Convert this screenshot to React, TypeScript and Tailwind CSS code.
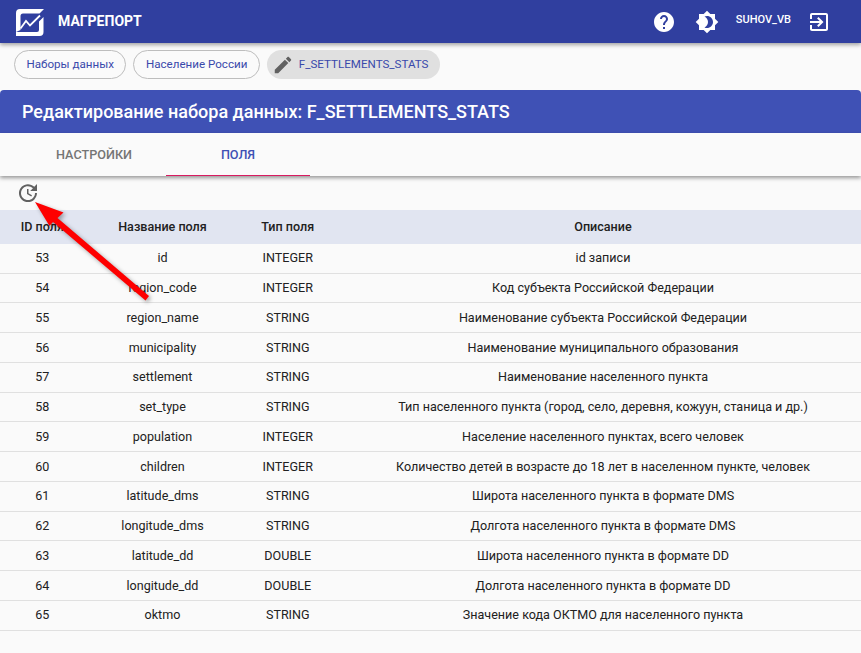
const rows = [
  ["53", "id", "INTEGER", "id записи"],
  ["54", "region_code", "INTEGER", "Код субъекта Российской Федерации"],
  ["55", "region_name", "STRING", "Наименование субъекта Российской Федерации"],
  ["56", "municipality", "STRING", "Наименование муниципального образования"],
  ["57", "settlement", "STRING", "Наименование населенного пункта"],
  ["58", "set_type", "STRING", "Тип населенного пункта (город, село, деревня, кожуун, станица и др.)"],
  ["59", "population", "INTEGER", "Население населенного пунктах, всего человек"],
  ["60", "children", "INTEGER", "Количество детей в возрасте до 18 лет в населенном пункте, человек"],
  ["61", "latitude_dms", "STRING", "Широта населенного пункта в формате DMS"],
  ["62", "longitude_dms", "STRING", "Долгота населенного пункта в формате DMS"],
  ["63", "latitude_dd", "DOUBLE", "Широта населенного пункта в формате DD"],
  ["64", "longitude_dd", "DOUBLE", "Долгота населенного пункта в формате DD"],
  ["65", "oktmo", "STRING", "Значение кода ОКТМО для населенного пункта"],
];

const Logo = () => (
  <svg width="30" height="30" viewBox="0 0 30 30" className="shrink-0">
    <path d="M5 2H29L24.5 6.5H8Q5.5 6.5 5.5 9V23L1 25V6Q1 2 5 2Z" fill="#fff" />
    <path d="M28.5 10V25Q28.5 29 24.5 29H1V25H22Q24 25 24 23V14.5Z" fill="#fff" />
    <path d="M5.5 21.5L11 14L15 18.5L25 8.5" fill="none" stroke="#fff" strokeWidth="1.8" />
  </svg>
);

const App = () => {
  return (
    <div className="relative w-[861px] h-[653px] overflow-hidden bg-[#fafafa] font-['Roboto',sans-serif] text-[12.57px] text-[#212121]">
      <header className="relative z-10 flex items-center h-[43px] pl-[15px] bg-[#303f9f] text-white shadow-[0_2px_4px_rgba(0,0,0,0.35)]">
        <Logo />
        <span className="ml-[13px] text-[14px] font-bold">МАГРЕПОРТ</span>
        <div className="ml-auto flex items-center">
          <svg width="24" height="24" viewBox="0 0 24 24" fill="#fff">
            <path d="M12 2C6.48 2 2 6.48 2 12s4.48 10 10 10 10-4.48 10-10S17.52 2 12 2zm1 17h-2v-2h2v2zm2.07-7.75l-.9.92C13.45 12.9 13 13.5 13 15h-2v-.5c0-1.1.45-2.1 1.17-2.83l1.24-1.26c.37-.36.59-.86.59-1.41 0-1.1-.9-2-2-2s-2 .9-2 2H8c0-2.21 1.79-4 4-4s4 1.79 4 4c0 .88-.36 1.68-.93 2.25z" />
          </svg>
          <svg className="ml-[19px]" width="24" height="24" viewBox="0 0 24 24" fill="#fff">
            <path d="M20 8.69V4h-4.69L12 .69 8.69 4H4v4.69L.69 12 4 15.31V20h4.69L12 23.31 15.31 20H20v-4.69L23.31 12 20 8.69zM12 18c-.89 0-1.74-.2-2.5-.55C11.56 16.5 13 14.42 13 12s-1.44-4.5-3.5-5.45C10.26 6.2 11.11 6 12 6c3.31 0 6 2.69 6 6s-2.69 6-6 6z" />
          </svg>
          <span className="ml-[17px] mb-[3px] text-[11px] font-medium">SUHOV_VB</span>
          <svg className="ml-[16px] mr-[30px]" width="24" height="24" viewBox="0 0 24 24" fill="#fff">
            <path d="M10.09 15.59L11.5 17l5-5-5-5-1.41 1.41L12.67 11H3v2h9.67l-2.58 2.59zM19 3H5c-1.11 0-2 .9-2 2v4h2V5h14v14H5v-4H3v4c0 1.1.89 2 2 2h14c1.1 0 2-.9 2-2V5c0-1.1-.9-2-2-2z" />
          </svg>
        </div>
      </header>

      <nav className="flex items-center gap-[7px] h-[43px] pl-[14px] text-[11.6px] text-[#3949ab]">
        <div className="flex items-center h-[29px] px-[11.5px] rounded-full border border-[#bdbdbd]">
          Наборы данных
        </div>
        <div className="flex items-center h-[29px] px-[11.5px] rounded-full border border-[#bdbdbd]">
          Население России
        </div>
        <div className="flex items-center h-[29px] pl-[5px] pr-[11px] rounded-full bg-[#e0e0e0]">
          <svg width="22" height="22" viewBox="0 0 24 24" fill="#616161">
            <path d="M3 17.25V21h3.75L17.81 9.94l-3.75-3.75L3 17.25zM20.71 7.04c.39-.39.39-1.02 0-1.41l-2.34-2.34c-.39-.39-1.02-.39-1.41 0l-1.83 1.83 3.75 3.75 1.83-1.83z" />
          </svg>
          <span className="ml-[5px]">F_SETTLEMENTS_STATS</span>
        </div>
      </nav>

      <div className="mt-[4px] flex items-center h-[43px] pl-[22px] rounded-t-[4px] bg-[#3f51b5] text-white text-[18px] font-medium">
        Редактирование набора данных: F_SETTLEMENTS_STATS
      </div>

      <div className="relative flex h-[43px] pl-[22px] bg-[#fafafa] shadow-[0_2px_4px_rgba(0,0,0,0.4)]">
        <div className="flex items-center justify-center w-[144px] text-[12.67px] font-medium text-[#757575]">НАСТРОЙКИ</div>
        <div className="flex items-center justify-center w-[144px] text-[12.67px] font-medium text-[#3f51b5] border-b border-[#d81b60]">ПОЛЯ</div>
      </div>

      <div className="flex items-center h-[34px] pl-[16px]">
        <svg width="24" height="24" viewBox="0 0 24 24" fill="#616161">
          <path d="M21 10.12h-6.78l2.74-2.82c-2.73-2.7-7.15-2.8-9.88-.1-2.73 2.71-2.73 7.08 0 9.79s7.15 2.71 9.88 0C18.32 15.65 19 14.08 19 12.1h2c0 1.98-.88 4.55-2.64 6.29-3.51 3.48-9.21 3.48-12.72 0-3.5-3.47-3.53-9.11-.02-12.58s9.14-3.47 12.65 0L21 3v7.12zM12.5 8v4.25l3.5 2.08-.72 1.21L11 13V8h1.5z" />
        </svg>
      </div>

      <div className="grid grid-cols-[84.5px_156px_94.5px_1fr] items-center h-[33.8px] pt-[1px] bg-[#e1e5f1] font-medium text-center">
        <div>ID поля</div>
        <div>Название поля</div>
        <div>Тип поля</div>
        <div className="pl-[10px]">Описание</div>
      </div>

      {rows.map((r) => (
        <div key={r[0]} className="grid grid-cols-[84.5px_156px_94.5px_1fr] items-center h-[29.77px] pt-[1px] border-b border-[#e0e0e0] text-center">
          <div>{r[0]}</div>
          <div>{r[1]}</div>
          <div>{r[2]}</div>
          <div className="pl-[10px]">{r[3]}</div>
        </div>
      ))}

      {/* annotation arrow drawn over the table */}
      <svg className="absolute left-0 top-0 drop-shadow-[2px_2px_2px_rgba(0,0,0,0.35)]" width="861" height="653" viewBox="0 0 861 653">
        <path d="M35 202L63.5 212.5L57.5 218L149 296L145.5 300.5L53 222L49.5 226Z" fill="#fe0000" />
      </svg>
    </div>
  );
};

export default App;
